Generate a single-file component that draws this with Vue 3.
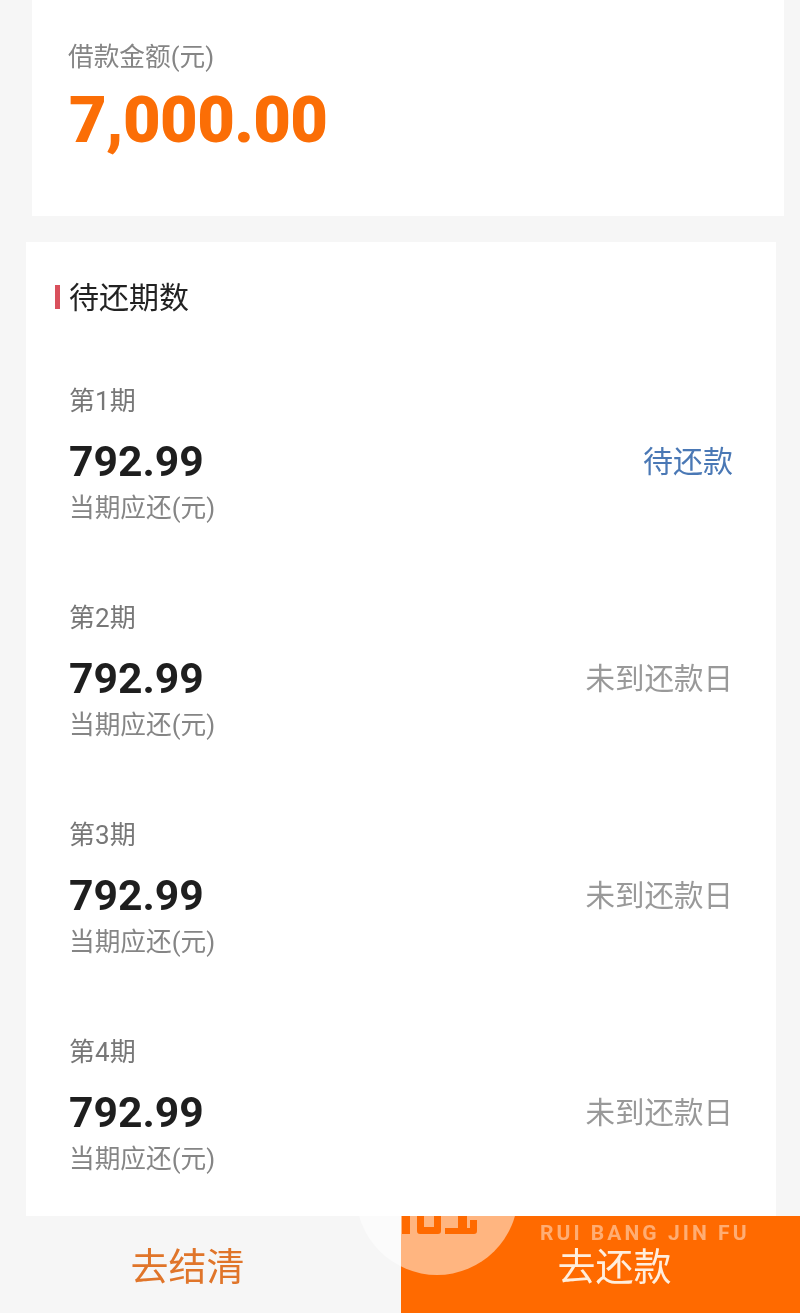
<template>
  <div class="page">
    <section class="loan-card">
      <div class="muted">借款金额(元)</div>
      <div class="loan-amount">7,000.00</div>
    </section>

    <section class="plan-card">
      <h2 class="plan-title">待还期数</h2>
      <div v-for="row in rows" :key="row.no" class="plan-row">
        <div class="row-no">第<span class="row-digit">{{ row.no }}</span>期</div>
        <div class="row-main">
          <span class="row-amount">{{ row.amount }}</span>
          <span class="row-state" :class="{ active: row.active }">{{ row.state }}</span>
        </div>
        <div class="muted">当期应还(元)</div>
      </div>
    </section>

    <footer class="actions">
      <div class="act act-clear">去结清</div>
      <div class="act act-pay">去还款</div>
    </footer>

    <!-- 水印，盖在底部按钮上 -->
    <div class="mark">
      <div class="mark-circle"></div>
      <svg class="mark-logo" width="76" height="18" viewBox="0 0 76 18">
        <path d="M0 0h8v18H0zM15 0h7v11h10V0h7v15q0 3-3 3H18q-3 0-3-3zM43 12h13V0h9v12h3V4h7v11q0 3-3 3H43z" fill="#ff6a00" />
      </svg>
      <div class="mark-en">RUI BANG JIN FU</div>
    </div>
  </div>
</template>

<script setup>
const rows = [
  { no: 1, amount: '792.99', state: '待还款', active: true },
  { no: 2, amount: '792.99', state: '未到还款日' },
  { no: 3, amount: '792.99', state: '未到还款日' },
  { no: 4, amount: '792.99', state: '未到还款日' }
]
</script>

<style>
html, body { margin: 0; background: #f6f6f6; }
</style>

<style scoped>
.page {
  position: relative; width: 800px; height: 1313px; overflow: hidden;
  display: flex; flex-direction: column;
  background: #f6f6f6;
  font-family: Roboto, 'Noto Sans CJK SC', sans-serif;
  filter: blur(0.4px);
}
.muted { font-size: 25.7px; line-height: 34px; color: #858585; }

.loan-card {
  width: 752px; height: 216px; margin-left: 32px;
  padding: 40px 0 0 36px; box-sizing: border-box;
  background: #fff;
}
.loan-amount {
  font-size: 65px; line-height: 76px; font-weight: 900; color: #fb6e06;
  letter-spacing: -0.6px;
  margin: 8px 0 0 1px;
}

.plan-card {
  width: 750px; height: 974px; margin: 26px 0 0 26px;
  padding: 34px 0 0 43px; box-sizing: border-box;
  background: #fff;
}
.plan-title {
  position: relative; margin: 0;
  font-size: 30px; line-height: 44px; font-weight: 400; color: #222;
}
.plan-title::before {
  content: ''; position: absolute; left: -14px; top: 9px;
  width: 5px; height: 24px; background: #d9505c;
}

.plan-row { height: 217px; padding-right: 43px; box-sizing: border-box; }
.plan-title + .plan-row { margin-top: 59px; }
.row-no { font-size: 26px; line-height: 44px; color: #777; }
.row-main {
  display: flex; justify-content: space-between; align-items: center;
  height: 60px; margin-top: 8px;
}
.row-amount { font-size: 42.7px; font-weight: 700; color: #1e1e1e; }
.row-state { font-size: 29.5px; color: #999; margin-top: -4px; }
.row-state.active { font-size: 30px; color: #4a78b5; }

.actions { display: flex; flex: 1; }
.act {
  display: flex; align-items: center; justify-content: center;
  font-size: 38px; padding-bottom: 3px; box-sizing: border-box;
}
.act-clear { width: 401px; padding-right: 26px; color: #e0752a; }
.act-pay { flex: 1; padding-left: 28px; background: #ff6a00; color: #ffeedd; }

.mark { position: absolute; left: 0; right: 0; top: 1216px; bottom: 0; overflow: hidden; }
.mark-circle {
  position: absolute; left: 356px; top: -103px;
  width: 162px; height: 162px; border-radius: 50%;
  background: rgba(255,255,255,0.5);
}
.mark-logo { position: absolute; left: 402px; top: 0; }
.mark-en {
  position: absolute; left: 540px; top: 4px;
  font-size: 21px; line-height: 26px; font-weight: 700; letter-spacing: 3.05px;
  color: rgba(255,255,255,0.45);
  white-space: nowrap;
}
</style>
